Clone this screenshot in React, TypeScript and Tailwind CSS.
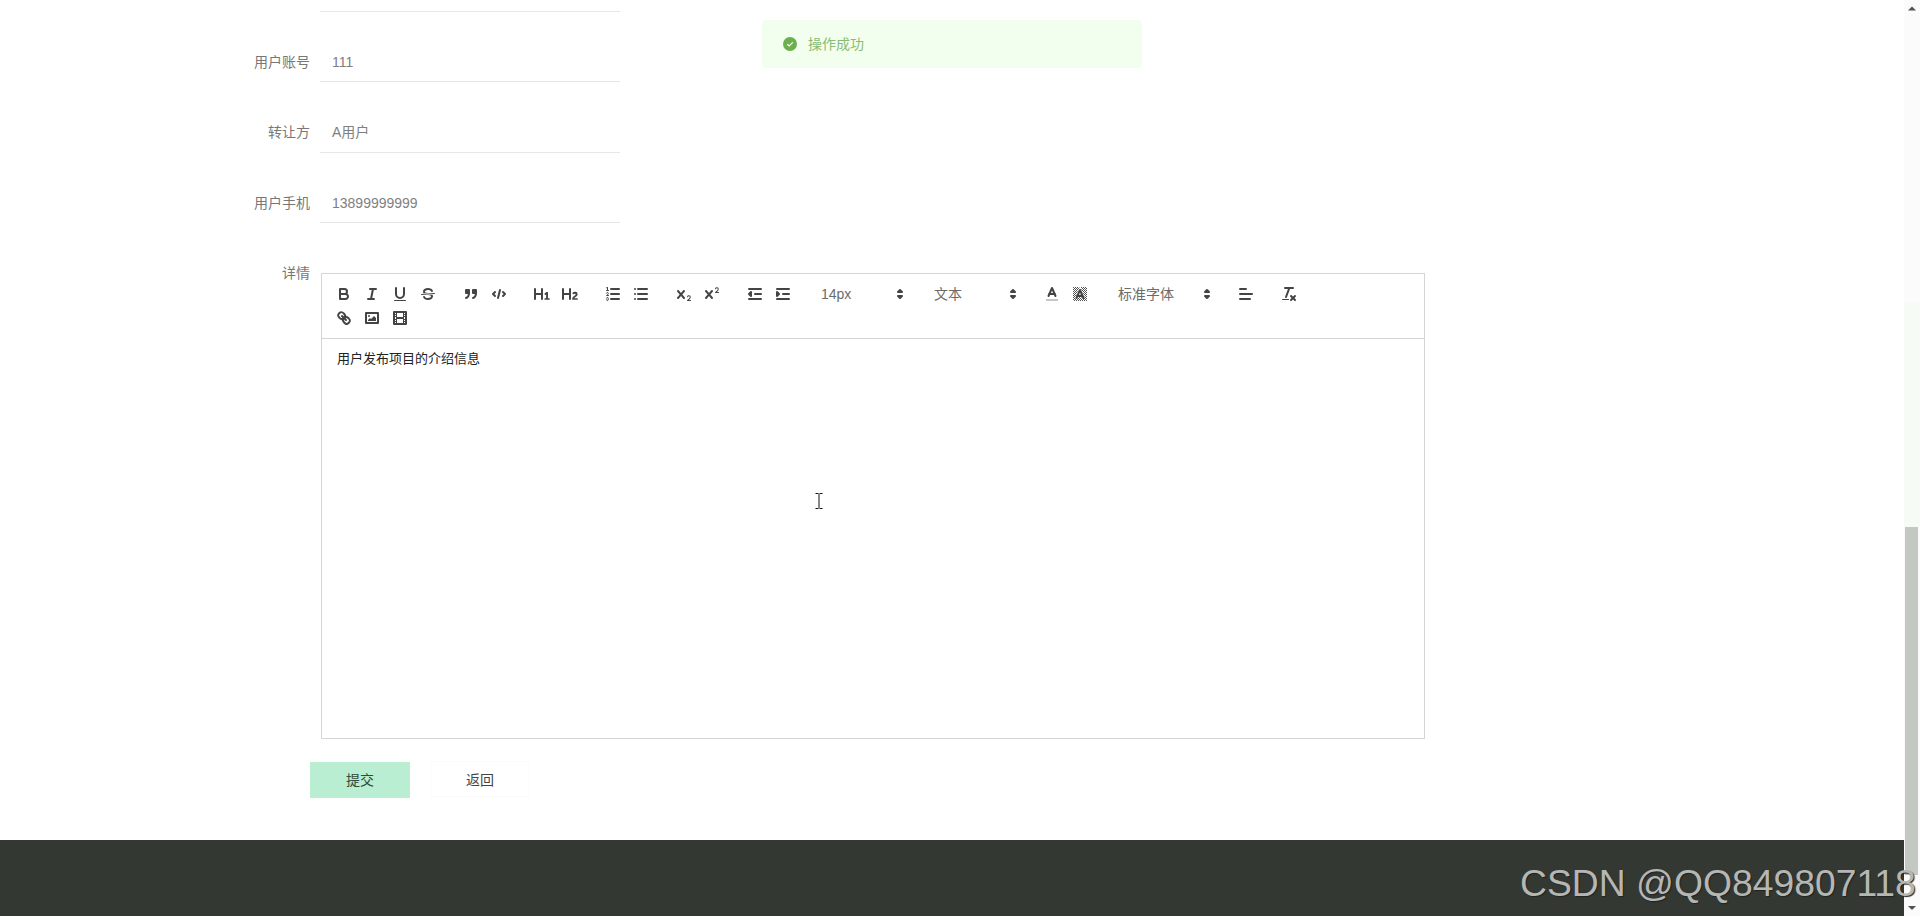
import React from 'react'

const STROKE = 'fill-none stroke-[#444] stroke-2 [stroke-linecap:round] [stroke-linejoin:round]'
const THIN = 'fill-none stroke-[#444] stroke-1 [stroke-linecap:round] [stroke-linejoin:round]'
const FILL = 'fill-[#444] stroke-none'
const FILLSTROKE = 'fill-[#444] stroke-[#444] stroke-2 [stroke-linecap:round] [stroke-linejoin:round]'

const Icon = ({ children }: { children: React.ReactNode }) => (
  <svg viewBox="0 0 18 18" className="h-[18px] w-[18px]">
    {children}
  </svg>
)

const Btn = ({ children }: { children: React.ReactNode }) => (
  <span className="flex h-6 w-7 items-center justify-center">
    <Icon>{children}</Icon>
  </span>
)

const Group = ({ children }: { children: React.ReactNode }) => (
  <span className="mr-[15px] flex">{children}</span>
)

const Picker = ({ label, width }: { label: string; width: string }) => (
  <span className={`flex h-6 items-center justify-between pl-[9px] pr-px text-[14px] font-normal leading-[22px] text-[#6a6c6a] ${width}`}>
    <span>{label}</span>
    <Icon>
      <polygon className={STROKE} points="7 11 9 13 11 11 7 11" />
      <polygon className={STROKE} points="7 7 9 5 11 7 7 7" />
    </Icon>
  </span>
)

const Field = ({ label, value, className, leading }: { label: string; value: string; className: string; leading: string }) => (
  <div className={`flex items-start ${className}`}>
    <label className={`h-10 w-[310px] text-right text-[14px] text-[#777] ${leading}`}>{label}</label>
    <div className={`ml-[10px] box-border h-10 w-[300px] border-b border-[#e6e8e6] pl-3 text-[14px] text-[#808080] ${leading}`}>
      {value}
    </div>
  </div>
)

function Toolbar() {
  return (
    <div className="box-border flex h-[65px] flex-wrap content-start border-b border-[#d3d6d2] p-2">
      <Group>
        <Btn>
          <path className={STROKE} d="M5,4H9.5A2.5,2.5,0,0,1,12,6.5v0A2.5,2.5,0,0,1,9.5,9H5A0,0,0,0,1,5,9V4A0,0,0,0,1,5,4Z" />
          <path className={STROKE} d="M5,9h5.5A2.5,2.5,0,0,1,13,11.5v0A2.5,2.5,0,0,1,10.5,14H5a0,0,0,0,1,0,0V9A0,0,0,0,1,5,9Z" />
        </Btn>
        <Btn>
          <line className={STROKE} x1="7" x2="13" y1="4" y2="4" />
          <line className={STROKE} x1="5" x2="11" y1="14" y2="14" />
          <line className={STROKE} x1="8" x2="10" y1="14" y2="4" />
        </Btn>
        <Btn>
          <path className={STROKE} d="M5,3V9a4.012,4.012,0,0,0,4,4H9a4.012,4.012,0,0,0,4-4V3" />
          <rect className={FILL} height="1" rx=".5" ry=".5" width="12" x="3" y="15" />
        </Btn>
        <Btn>
          <line className={THIN} x1="15.5" x2="2.5" y1="8.5" y2="9.5" />
          <path className={FILL} d="M9.007,8C6.542,7.791,6,7.519,6,6.5,6,5.792,7.283,5,9,5c1.571,0,2.765.679,2.969,1.309a1,1,0,0,0,1.9-.617C13.356,4.106,11.354,3,9,3,6.2,3,4,4.538,4,6.5a3.2,3.2,0,0,0,.5,1.843Z" />
          <path className={FILL} d="M8.984,10C11.457,10.208,12,10.479,12,11.5c0,.708-1.283,1.5-3,1.5-1.571,0-2.765-.679-2.969-1.309a1,1,0,1,0-1.9.617C4.644,13.894,6.646,15,9,15c2.8,0,5-1.538,5-3.5a3.2,3.2,0,0,0-.5-1.843Z" />
        </Btn>
      </Group>
      <Group>
        <Btn>
          <rect className={FILLSTROKE} height="3" width="3" x="4" y="5" />
          <rect className={FILLSTROKE} height="3" width="3" x="11" y="5" />
          <path className={STROKE} d="M7,8c0,4.031-3,5-3,5" />
          <path className={STROKE} d="M14,8c0,4.031-3,5-3,5" />
        </Btn>
        <Btn>
          <polyline className={STROKE} points="5 7 3 9 5 11" />
          <polyline className={STROKE} points="13 7 15 9 13 11" />
          <line className={STROKE} x1="10" x2="8" y1="5" y2="13" />
        </Btn>
      </Group>
      <Group>
        <Btn>
          <path className={FILL} d="M10,4V14a1,1,0,0,1-2,0V10H3v4a1,1,0,0,1-2,0V4A1,1,0,0,1,3,4V8H8V4a1,1,0,0,1,2,0Zm6.06787,9.209H14.98975V7.59863a.54085.54085,0,0,0-.605-.60547h-.62744a1.01119,1.01119,0,0,0-.748.29688L11.645,8.56641a.5435.5435,0,0,0-.022.8584l.28613.30762a.53861.53861,0,0,0,.84717.0332l.09912-.08789a1.2137,1.2137,0,0,0,.2417-.35254h.02246s-.01123.30859-.01123.60547V13.209H12.041a.54085.54085,0,0,0-.605.60547v.43945a.54085.54085,0,0,0,.605.60547h4.02686a.54085.54085,0,0,0,.605-.60547v-.43945A.54085.54085,0,0,0,16.06787,13.209Z" />
        </Btn>
        <Btn>
          <path className={FILL} d="M16.73975,13.81445v.43945a.54085.54085,0,0,1-.605.60547H11.855a.58392.58392,0,0,1-.64893-.60547V14.0127c0-2.90527,3.39941-3.42187,3.39941-4.55469a.77675.77675,0,0,0-.84717-.78125,1.17684,1.17684,0,0,0-.83594.38477c-.2749.26367-.561.374-.85791.13184l-.4292-.34082c-.30811-.24219-.38525-.51758-.1543-.81445a2.97155,2.97155,0,0,1,2.45361-1.17676,2.45393,2.45393,0,0,1,2.68408,2.40918c0,2.45312-3.1792,2.92676-3.27832,3.93848h2.79443A.54085.54085,0,0,1,16.73975,13.81445ZM9,3A.99974.99974,0,0,0,8,4V8H3V4A1,1,0,0,0,1,4V14a1,1,0,0,0,2,0V10H8v4a1,1,0,0,0,2,0V4A.99974.99974,0,0,0,9,3Z" />
        </Btn>
      </Group>
      <Group>
        <Btn>
          <line className={STROKE} x1="7" x2="15" y1="4" y2="4" />
          <line className={STROKE} x1="7" x2="15" y1="9" y2="9" />
          <line className={STROKE} x1="7" x2="15" y1="14" y2="14" />
          <line className={THIN} x1="2.5" x2="4.5" y1="5.5" y2="5.5" />
          <path className={FILL} d="M3.5,6A0.5,0.5,0,0,1,3,5.5V3.085l-0.276.138A0.5,0.5,0,0,1,2.053,3c-0.124-.247-0.023-0.324.224-0.447l1-.5A0.5,0.5,0,0,1,4,2.5v3A0.5,0.5,0,0,1,3.5,6Z" />
          <path className={THIN} d="M4.5,10.5h-2c0-.234,1.85-1.076,1.85-2.234A0.959,0.959,0,0,0,2.5,8.156" />
          <path className={THIN} d="M2.5,14.846a0.959,0.959,0,0,0,1.85-.109A0.7,0.7,0,0,0,3.75,14a0.688,0.688,0,0,0,.6-0.736,0.959,0.959,0,0,0-1.85-.109" />
        </Btn>
        <Btn>
          <line className={STROKE} x1="6" x2="15" y1="4" y2="4" />
          <line className={STROKE} x1="6" x2="15" y1="9" y2="9" />
          <line className={STROKE} x1="6" x2="15" y1="14" y2="14" />
          <line className={STROKE} x1="3" x2="3" y1="4" y2="4" />
          <line className={STROKE} x1="3" x2="3" y1="9" y2="9" />
          <line className={STROKE} x1="3" x2="3" y1="14" y2="14" />
        </Btn>
      </Group>
      <Group>
        <Btn>
          <path className={FILL} d="M15.5,15H13.861a3.858,3.858,0,0,0,1.914-2.975,1.8,1.8,0,0,0-1.6-1.751A1.921,1.921,0,0,0,12.021,11.7a0.50013,0.50013,0,1,0,.957.291h0a0.914,0.914,0,0,1,1.053-.725,0.81,0.81,0,0,1,.744.762c0,1.076-1.16971,1.86982-1.93971,2.43082A1.45639,1.45639,0,0,0,12,15.5a0.5,0.5,0,0,0,.5.5h3A0.5,0.5,0,0,0,15.5,15Z" />
          <path className={FILL} d="M9.65,5.241a1,1,0,0,0-1.409.108L6,7.964,3.759,5.349A1,1,0,0,0,2.192,6.59178Q2.2,6.6,2.241,6.651L4.684,9.5,2.241,12.35A1,1,0,0,0,3.71,13.70722q0.04-.05.04-0.05L6,11.036l2.241,2.614a1,1,0,0,0,1.567-1.242Q9.8,12.4,9.759,12.35L7.316,9.5,9.759,6.651A1,1,0,0,0,9.65,5.241Z" />
        </Btn>
        <Btn>
          <path className={FILL} d="M15.5,7H13.861a4.015,4.015,0,0,0,1.914-2.975,1.8,1.8,0,0,0-1.6-1.751A1.922,1.922,0,0,0,12.021,3.7a0.5,0.5,0,1,0,.957.291,0.917,0.917,0,0,1,1.053-.725,0.81,0.81,0,0,1,.744.762c0,1.077-1.164,1.925-1.934,2.486A1.423,1.423,0,0,0,12,7.5a0.5,0.5,0,0,0,.5.5h3A0.5,0.5,0,0,0,15.5,7Z" />
          <path className={FILL} d="M9.651,5.241a1,1,0,0,0-1.41.108L6,7.964,3.759,5.349a1,1,0,1,0-1.519,1.3L4.683,9.5,2.241,12.35a1,1,0,1,0,1.519,1.3L6,11.036l2.241,2.614a1,1,0,0,0,1.519-1.3L7.317,9.5,9.759,6.651A1,1,0,0,0,9.651,5.241Z" />
        </Btn>
      </Group>
      <Group>
        <Btn>
          <line className={STROKE} x1="3" x2="15" y1="14" y2="14" />
          <line className={STROKE} x1="3" x2="15" y1="4" y2="4" />
          <line className={STROKE} x1="9" x2="15" y1="9" y2="9" />
          <polyline className={FILLSTROKE} points="5 7 5 11 3 9 5 7" />
        </Btn>
        <Btn>
          <line className={STROKE} x1="3" x2="15" y1="14" y2="14" />
          <line className={STROKE} x1="3" x2="15" y1="4" y2="4" />
          <line className={STROKE} x1="9" x2="15" y1="9" y2="9" />
          <polyline className={FILLSTROKE} points="3 7 3 11 5 9 3 7" />
        </Btn>
      </Group>
      <Group>
        <Picker label="14px" width="w-[98px]" />
      </Group>
      <Group>
        <Picker label="文本" width="w-[98px]" />
      </Group>
      <Group>
        <Btn>
          <line className="fill-none stroke-[#c4c8c4] stroke-2" x1="3" x2="15" y1="15" y2="15" />
          <polyline className={STROKE} points="5.5 11 9 3 12.5 11" />
          <line className={STROKE} x1="11.63" x2="6.38" y1="9" y2="9" />
        </Btn>
        <Btn>
          <defs>
            <pattern id="bgHatch" width="2" height="2" patternUnits="userSpaceOnUse">
              <rect width="1" height="1" x="0" y="0" fill="#555" />
              <rect width="1" height="1" x="1" y="1" fill="#555" />
            </pattern>
          </defs>
          <rect x="2" y="2" width="14" height="14" fill="url(#bgHatch)" />
          <polyline className="fill-none stroke-white stroke-[3]" points="5.5 13 9 5 12.5 13" />
          <polyline className={STROKE} points="5.5 13 9 5 12.5 13" />
          <line className={STROKE} x1="11.63" x2="6.38" y1="11" y2="11" />
        </Btn>
      </Group>
      <Group>
        <Picker label="标准字体" width="w-[108px]" />
      </Group>
      <Group>
        <Btn>
          <line className={STROKE} x1="3" x2="15" y1="9" y2="9" />
          <line className={STROKE} x1="3" x2="13" y1="14" y2="14" />
          <line className={STROKE} x1="3" x2="9" y1="4" y2="4" />
        </Btn>
      </Group>
      <Group>
        <Btn>
          <line className={STROKE} x1="5" x2="13" y1="3" y2="3" />
          <line className={STROKE} x1="6" x2="9.35" y1="12" y2="3" />
          <line className={STROKE} x1="11" x2="15" y1="11" y2="15" />
          <line className={STROKE} x1="15" x2="11" y1="11" y2="15" />
          <rect className={FILL} height="1" rx=".5" ry=".5" width="7" x="2" y="14" />
        </Btn>
      </Group>
      <Group>
        <Btn>
          <line className={STROKE} x1="7" x2="11" y1="7" y2="11" />
          <path className={STROKE} d="M8.9,4.577a3.476,3.476,0,0,1,.36,4.679A3.476,3.476,0,0,1,4.577,8.9C3.185,7.5,2.035,6.4,4.217,4.217S7.5,3.185,8.9,4.577Z" />
          <path className={STROKE} d="M13.423,9.1a3.476,3.476,0,0,0-4.679-.36,3.476,3.476,0,0,0,.36,4.679c1.392,1.392,2.5,2.542,4.679.36S14.815,10.5,13.423,9.1Z" />
        </Btn>
        <Btn>
          <rect className={STROKE} height="10" width="12" x="3" y="4" />
          <circle className={FILL} cx="6" cy="7" r="1" />
          <polyline className={FILL} points="5 12 5 11 7 9 8 10 11 7 13 9 13 12 5 12" />
        </Btn>
        <Btn>
          <rect className={STROKE} height="12" width="12" x="3" y="3" />
          <rect className={FILL} height="12" width="1" x="5" y="3" />
          <rect className={FILL} height="12" width="1" x="12" y="3" />
          <rect className={FILL} height="2" width="8" x="5" y="8" />
          <rect className={FILL} height="1" width="3" x="3" y="5" />
          <rect className={FILL} height="1" width="3" x="3" y="7" />
          <rect className={FILL} height="1" width="3" x="3" y="10" />
          <rect className={FILL} height="1" width="3" x="3" y="12" />
          <rect className={FILL} height="1" width="3" x="12" y="5" />
          <rect className={FILL} height="1" width="3" x="12" y="7" />
          <rect className={FILL} height="1" width="3" x="12" y="10" />
          <rect className={FILL} height="1" width="3" x="12" y="12" />
        </Btn>
      </Group>
    </div>
  )
}

export default function App() {
  return (
    <div className="relative flex h-[916px] w-[1920px] overflow-hidden bg-white font-['Liberation_Sans','Noto_Sans_CJK_SC',sans-serif]">
      <main className="flex w-[1904px] flex-col">
        <div className="flex-1">
          {/* first row is scrolled off, only its underline still shows */}
          <div className="ml-[320px] box-border h-3 w-[300px] border-b border-[#e6e8e6]" />
          <Field label="用户账号" value="111" className="mt-[30px]" leading="leading-10" />
          <Field label="转让方" value="A用户" className="mt-[31px]" leading="leading-[38px]" />
          <Field label="用户手机" value="13899999999" className="mt-[30px]" leading="leading-10" />

          <div className="mt-[50px] flex items-start">
            <label className="-mt-[10px] h-5 w-[310px] text-right text-[14px] leading-5 text-[#777]">详情</label>
            <div className="ml-[11px] box-border h-[466px] w-[1104px] border border-[#d3d6d2]">
              <Toolbar />
              <div className="px-[15px] pt-[11px] text-[13px] leading-[18.5px] text-[#222]">用户发布项目的介绍信息</div>
            </div>
          </div>

          <div className="ml-[310px] mt-[23px] flex items-start gap-5">
            <button className="h-9 w-[100px] bg-[#b9eed3] text-center text-[14px] text-[#2f4a3a]">提交</button>
            <button className="-mt-px h-9 w-[100px] border border-[#fbfbfb] bg-white pt-[3px] text-center text-[14px] text-[#444]">返回</button>
          </div>
        </div>
        <footer className="h-[76px] bg-[#343832]" />
      </main>

      <aside className="flex w-4 flex-col bg-[#fafbfa]">
        <svg viewBox="0 0 16 16" className="h-4 w-4">
          <polygon points="4,10.5 12,10.5 8,6.5" fill="#505050" />
        </svg>
        <div className="h-[287px]" />
        <div className="h-[224px] bg-[#f7fbf6]" />
        <div className="ml-px h-[348px] w-[13px] bg-[#c3c8c3]" />
        <div className="flex-1" />
        <svg viewBox="0 0 16 16" className="h-4 w-4">
          <polygon points="4,6 12,6 8,10" fill="#505050" />
        </svg>
      </aside>

      <div className="absolute left-[762px] top-5 flex h-12 w-[380px] items-center rounded bg-[#f2ffee] pl-[21px]">
        <svg viewBox="0 0 14 14" className="h-[14px] w-[14px]">
          <circle cx="7" cy="7" r="7" fill="#6bb04d" />
          <polyline points="4.2,7.2 6.2,9 9.8,5.4" fill="none" stroke="#fff" strokeWidth="1.2" />
        </svg>
        <span className="ml-[11px] text-[14px] text-[#8abb74]">操作成功</span>
      </div>

      <svg viewBox="0 0 8 16" className="absolute left-[815px] top-[493px] h-4 w-2">
        <path d="M0.5 0.5h3M4.5 0.5h3M4 1v14M0.5 15.5h3M4.5 15.5h3" fill="none" stroke="#111" strokeWidth="1" />
      </svg>

      <span className="absolute left-[1520px] top-[860px] whitespace-nowrap text-[37.3px] leading-[46px] text-[#b5b7b5] [text-shadow:1px_1px_1px_#222]">
        CSDN @QQ849807118
      </span>
    </div>
  )
}
